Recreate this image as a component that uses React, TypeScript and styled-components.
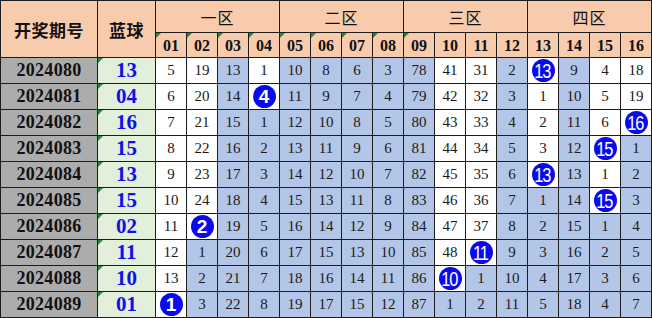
import React from "react";
import styled, { createGlobalStyle, css } from "styled-components";

const GlobalStyle = createGlobalStyle`
  html, body {
    margin: 0;
    padding: 0;
    background: #ffffff;
  }
`;

const periods = ["2024080", "2024081", "2024082", "2024083", "2024084", "2024085", "2024086", "2024087", "2024088", "2024089"];
const blues = [13, 4, 16, 15, 13, 15, 2, 11, 10, 1];
// omission values of the first row (0 = drawn)
const firstRow = [5, 19, 13, 1, 10, 8, 6, 3, 78, 41, 31, 2, 0, 9, 4, 18];
const zones = ["一区", "二区", "三区", "四区"];

const buildRows = () => {
  const rows: number[][] = [firstRow];
  for (let r = 1; r < blues.length; r++) {
    rows.push(rows[r - 1].map((v, c) => (blues[r] === c + 1 ? 0 : v + 1)));
  }
  return rows;
};

const pad = (n: number) => (n < 10 ? `0${n}` : `${n}`);

const noteMark = css`
  &::before {
    content: "";
    position: absolute;
    left: 0;
    top: 0;
    border-top: 5px solid #1e8c3a;
    border-right: 5px solid transparent;
  }
`;

const Sheet = styled.table`
  width: 652px;
  height: 318px;
  border-collapse: collapse;
  table-layout: fixed;
  font-family: "Liberation Serif", "Noto Sans CJK SC", serif;
  color: #111;
`;

const Col = styled.col<{ $w?: number }>`
  ${(p) => p.$w && `width: ${p.$w}px;`}
`;

const TopRow = styled.tr`
  height: 32px;
`;

const SubRow = styled.tr`
  height: 25px;
`;

const DataRow = styled.tr`
  height: 26px;
`;

const Cell = styled.td`
  position: relative;
  border: 1px solid #1c1c1c;
  padding: 0;
  text-align: center;
  vertical-align: middle;
  white-space: nowrap;
`;

const TitleCell = styled(Cell)`
  background: #f8cbad;
  font-family: "Noto Sans CJK SC", sans-serif;
  font-size: 17px;
  font-weight: 700;
  letter-spacing: 0.5px;
`;

const ZoneCell = styled(Cell)`
  background: #f8cbad;
  font-family: "Noto Sans CJK SC", sans-serif;
  font-size: 16px;
  font-weight: 400;
  letter-spacing: 1px;
`;

const NumHead = styled(Cell)<{ $note?: boolean }>`
  background: #f8cbad;
  font-size: 16px;
  font-weight: 700;
  padding-top: 2px;
  ${(p) => p.$note && noteMark}
`;

const PeriodCell = styled(Cell)`
  background: #acacac;
  font-size: 18px;
  font-weight: 700;
  letter-spacing: 0.3px;
`;

const BlueCell = styled(Cell)`
  background: #e2efda;
  color: #1010e8;
  font-size: 21px;
  font-weight: 700;
  ${noteMark}
`;

const DataCell = styled(Cell)<{ $white: boolean }>`
  background: ${(p) => (p.$white ? "#ffffff" : "#b4c6e7")};
  font-size: 15px;
  color: #1a1a1a;
`;

const Ball = styled.span<{ $wide: boolean }>`
  display: inline-flex;
  align-items: center;
  justify-content: center;
  width: 23px;
  height: 23px;
  border-radius: 50%;
  background: #0a0af0;
  color: #ffffff;
  font-family: "Liberation Sans", Arial, sans-serif;
  vertical-align: middle;
  ${(p) =>
    p.$wide
      ? css`
          font-size: 21px;
          letter-spacing: -1.5px;
          & > span {
            display: inline-block;
            transform: scaleX(0.78);
            margin-left: -1px;
          }
        `
      : css`
          font-size: 19px;
          font-weight: 700;
        `}
`;

export default function App() {
  const rows = buildRows();
  const lastHit = (c: number) => {
    let last = -1;
    blues.forEach((b, r) => {
      if (b === c + 1) last = r;
    });
    return last;
  };
  const hitRows = Array.from({ length: 16 }, (_, c) => lastHit(c));

  return (
    <>
      <GlobalStyle />
      <Sheet>
        <colgroup>
          <Col $w={97} />
          <Col $w={58} />
          {Array.from({ length: 16 }, (_, i) => (
            <Col key={i} />
          ))}
        </colgroup>
        <thead>
          <TopRow>
            <TitleCell rowSpan={2}>开奖期号</TitleCell>
            <TitleCell rowSpan={2}>蓝球</TitleCell>
            {zones.map((z) => (
              <ZoneCell key={z} colSpan={4}>
                {z}
              </ZoneCell>
            ))}
          </TopRow>
          <SubRow>
            {Array.from({ length: 16 }, (_, i) => (
              <NumHead key={i} $note={i < 9}>
                {pad(i + 1)}
              </NumHead>
            ))}
          </SubRow>
        </thead>
        <tbody>
          {rows.map((vals, r) => (
            <DataRow key={periods[r]}>
              <PeriodCell>{periods[r]}</PeriodCell>
              <BlueCell>{pad(blues[r])}</BlueCell>
              {vals.map((v, c) => (
                <DataCell key={c} $white={r <= hitRows[c]}>
                  {v === 0 ? (
                    <Ball $wide={c + 1 >= 10}>
                      <span>{c + 1}</span>
                    </Ball>
                  ) : (
                    v
                  )}
                </DataCell>
              ))}
            </DataRow>
          ))}
        </tbody>
      </Sheet>
    </>
  );
}
